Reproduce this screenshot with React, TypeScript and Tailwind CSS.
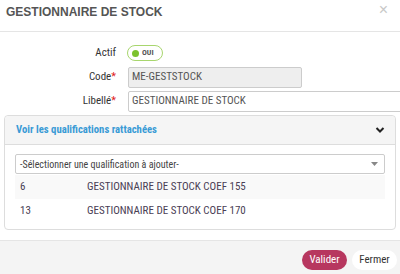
import React from "react";

export default function App() {
  return (
    <div className="w-[400px] h-[274px] overflow-hidden bg-white flex flex-col text-[11px] text-[#333] font-['Roboto_Condensed',sans-serif]">
      {/* Header */}
      <div className="h-[32px] shrink-0 border-b border-[#e5e5e5] flex items-start justify-between pl-[6px] pr-[12px]">
        <h1 className="mt-[3px] text-[12px] font-bold text-[#555] font-['Liberation_Sans',Arial,sans-serif]">
          GESTIONNAIRE DE STOCK
        </h1>
        <span className="mt-[1px] text-[16px] text-[#c8c8c8] leading-[18px] font-['Liberation_Sans',Arial,sans-serif]">×</span>
      </div>

      {/* Body */}
      <div className="flex-1 flex flex-col pt-[11px]">
        <div className="flex items-center h-[20px]">
          <div className="w-[116px] text-right">Actif</div>
          <div className="ml-[11px] h-[16px] w-[36px] rounded-full border border-[#a8d66e] flex items-center pl-[4px] gap-[3px]">
            <span className="w-[7px] h-[7px] rounded-full bg-[#7cc22e]"></span>
            <span className="text-[8px] font-bold text-[#555]">OUI</span>
          </div>
        </div>
        <div className="flex items-center mt-[3px] h-[22px]">
          <div className="w-[116px] text-right">
            Code<span className="text-[#e02020]">*</span>
          </div>
          <div className="ml-[12px] w-[174px] h-[21px] border border-[#ccc] bg-[#eee] rounded-[2px] flex items-center pl-[3px] text-[#555]">
            ME-GESTSTOCK
          </div>
        </div>
        <div className="flex items-center mt-[3px] h-[21px]">
          <div className="w-[116px] text-right shrink-0">
            Libellé<span className="text-[#e02020]">*</span>
          </div>
          <div className="ml-[12px] w-[290px] shrink-0 h-[21px] border border-[#ccc] bg-white rounded-[2px] flex items-center pl-[3px] text-[#555]">
            GESTIONNAIRE DE STOCK
          </div>
        </div>

        {/* Panel */}
        <div className="mx-[4px] mt-[3px] border border-[#ddd] rounded-[4px] flex flex-col">
          <div className="h-[29px] bg-[#f5f5f5] border-b border-[#ddd] rounded-t-[4px] flex items-center justify-between pl-[11px] pr-[10px]">
            <span className="font-bold text-[10.7px] text-[#3a9bd5]">Voir les qualifications rattachées</span>
            <svg width="10" height="8" viewBox="0 0 10 8">
              <path d="M1.5 2 L5 5.5 L8.5 2" fill="none" stroke="#222" strokeWidth="2" />
            </svg>
          </div>
          <div className="px-[10px] pt-[9px] pb-[6px]">
            <div className="h-[20px] border border-[#ccc] rounded-[2px] flex items-center justify-between pl-[4px] pr-[6px] text-[10px] text-[#444]">
              <span>-Sélectionner une qualification à ajouter-</span>
              <svg width="7" height="4" viewBox="0 0 7 4">
                <path d="M0 0 L7 0 L3.5 4 Z" fill="#888" />
              </svg>
            </div>
            <div className="mt-[1px]">
              <div className="h-[24px] bg-[#f9f9f9] flex items-center text-[#4a4055]">
                <span className="w-[72px] pl-[5px]">6</span>
                <span>GESTIONNAIRE DE STOCK COEF 155</span>
              </div>
              <div className="h-[24px] flex items-center text-[#4a4055]">
                <span className="w-[72px] pl-[5px]">13</span>
                <span>GESTIONNAIRE DE STOCK COEF 170</span>
              </div>
            </div>
          </div>
        </div>
      </div>

      {/* Footer */}
      <div className="h-[34px] shrink-0 border-t border-[#e5e5e5] bg-[#f4f4f4] flex items-start justify-end gap-[5px] pr-[3px] pt-[9px]">
        <button className="h-[20px] w-[45px] rounded-full bg-[#b7375f] text-white text-[11px]">Valider</button>
        <button className="h-[20px] w-[45px] rounded-full bg-white text-[#333] text-[11px]">Fermer</button>
      </div>
    </div>
  );
}
